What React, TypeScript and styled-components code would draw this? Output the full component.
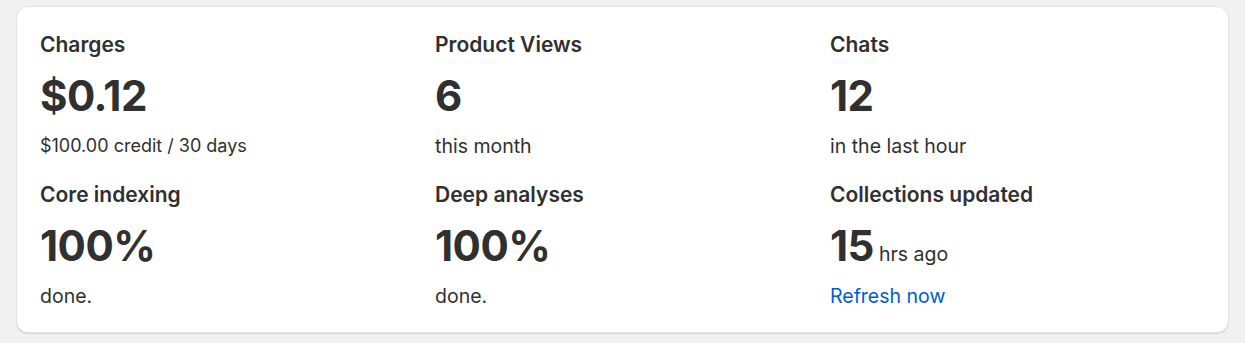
import styled, { createGlobalStyle } from "styled-components"

const GlobalStyle = createGlobalStyle`
    html, body {
        margin: 0;
        background: #f1f1f1;
        font-family: Inter, "Noto Sans", sans-serif;
        color: #303030;
    }
`

type stat = {
    title: string
    value: string
    unit?: string
    caption?: string
    small?: boolean
    link?: string
}

const stats: stat[] = [
    { title: 'Charges', value: '$0.12', caption: '$100.00 credit / 30 days', small: true },
    { title: 'Product Views', value: '6', caption: 'this month' },
    { title: 'Chats', value: '12', caption: 'in the last hour' },
    { title: 'Core indexing', value: '100%', caption: 'done.' },
    { title: 'Deep analyses', value: '100%', caption: 'done.' },
    { title: 'Collections updated', value: '15', unit: 'hrs ago', link: 'Refresh now' },
]

function App() {
    return (
        <Page>
            <GlobalStyle />
            <Card>
                {stats.map((s, n) => (
                    <Stat key={'stat' + n}>
                        <Title>{s.title}</Title>
                        <Value>
                            {s.value}
                            {s.unit ? <Unit>{s.unit}</Unit> : undefined}
                        </Value>
                        {s.link
                            ? <Link href="#">{s.link}</Link>
                            : <Caption small={s.small}>{s.caption}</Caption>}
                    </Stat>
                ))}
            </Card>
        </Page>
    )
}

export default App

//#region Styles
const Page = styled.div`
    padding: 6px 16px 10px;
`

const Card = styled.div`
    display: grid;
    grid-template-columns: repeat(3, 1fr);
    column-gap: 20px;
    row-gap: 25px;

    padding: 26px 23px 24px;
    background: #ffffff;
    border: 1px solid #e3e3e3;
    border-radius: 12px;
    box-shadow: 0 1px 0 rgba(26, 26, 26, 0.07), 0 1px 1px rgba(0, 0, 0, 0.05);
`

const Stat = styled.div`
    display: flex;
    flex-direction: column;
    align-items: flex-start;
`

const Title = styled.div`
    font-size: 21px;
    font-weight: 600;
    line-height: 24px;
    margin-bottom: 11px;
`

const Value = styled.div`
    font-size: 42px;
    font-weight: 700;
    line-height: 56px;
    letter-spacing: -0.5px;
    margin-bottom: 10px;
`

const Unit = styled.span`
    font-size: 19.5px;
    font-weight: 400;
    line-height: 1;
    letter-spacing: 0;
    margin-left: 5px;
`

const Caption = styled.div<{ small?: boolean }>`
    font-size: ${props => props.small ? '18px' : '19.5px'};
    line-height: 24px;
`

const Link = styled.a`
    font-size: 19.5px;
    line-height: 24px;
    color: #005bd3;
    text-decoration: none;
`
//#endregion
